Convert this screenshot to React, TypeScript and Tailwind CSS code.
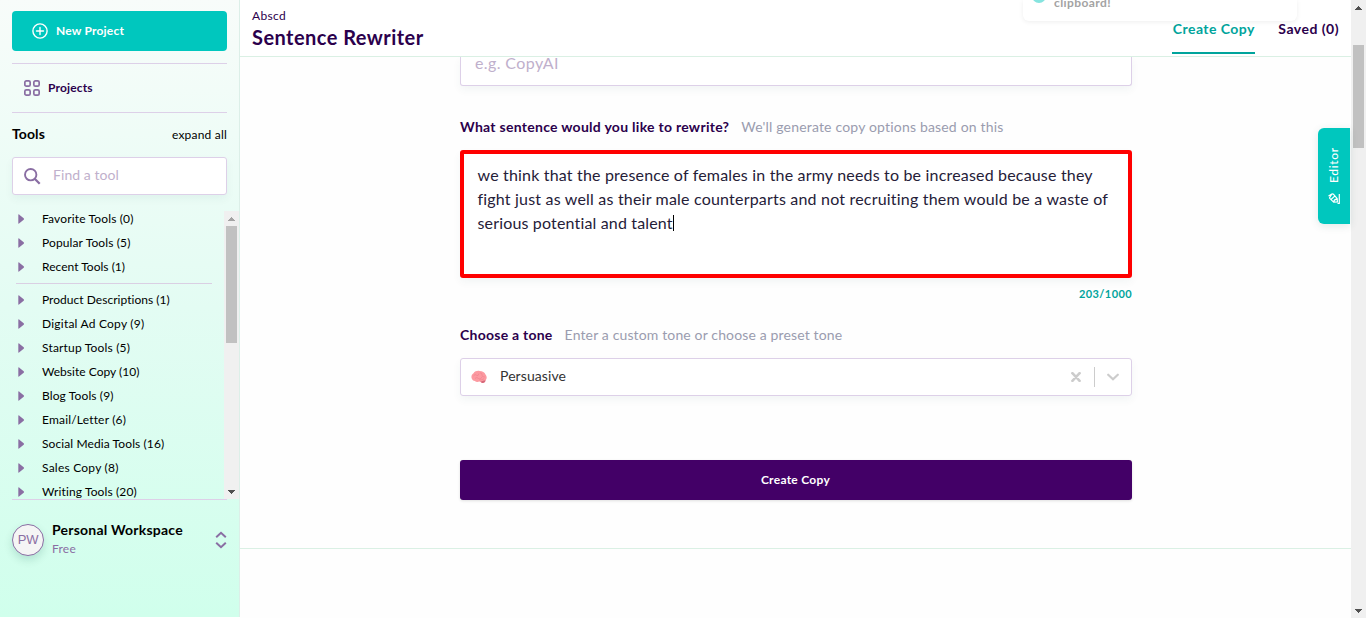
import React from "react";

const favourites = [
  { label: "Favorite Tools (0)", track: "tracking-[0.15px]" },
  { label: "Popular Tools (5)", track: "tracking-[0.12px]" },
  { label: "Recent Tools (1)", track: "tracking-[0.02px]" },
];

const categories = [
  { label: "Product Descriptions (1)", track: "tracking-[0.03px]" },
  { label: "Digital Ad Copy (9)", track: "tracking-[0.22px]" },
  { label: "Startup Tools (5)", track: "tracking-[0.18px]" },
  { label: "Website Copy (10)", track: "tracking-[0.02px]" },
  { label: "Blog Tools (9)", track: "tracking-[0.12px]" },
  { label: "Email/Letter (6)", track: "tracking-[0.18px]" },
  { label: "Social Media Tools (16)", track: "tracking-[0.1px]" },
  { label: "Sales Copy (8)", track: "tracking-[0.23px]" },
  { label: "Writing Tools (20)", track: "tracking-[0.12px]" },
];

function ToolRow({ label, track }: { label: string; track: string }) {
  return (
    <li className="flex h-6 items-center">
      <svg width="6" height="10" viewBox="0 0 6 10" className="mr-[18px] ml-[6px] shrink-0">
        <path d="M.3 .8Q.3 0 1 .5L5.700 4.300Q6.200 5 5.700 5.700L1 9.500Q.3 10 .3 9.200Z" fill="#8a6ea3" />
      </svg>
      <span className={`text-xs text-black ${track}`}>{label}</span>
    </li>
  );
}

function ScrollArrow({ down = false, color }: { down?: boolean; color: string }) {
  return (
    <svg width="15" height="15" viewBox="0 0 15 15" shapeRendering="crispEdges" className="shrink-0">
      <path d={down ? "M4 6h7L7.5 9.8Z" : "M4 9.500h7L7.500 5.500Z"} fill={color} />
    </svg>
  );
}

function Sidebar() {
  return (
    <aside className="flex h-[617px] w-60 shrink-0 flex-col border-r border-[#dcefe8] bg-linear-to-b from-[#f8fcfa] via-[#e3fcf3] to-[#d0ffec] pt-[11px] pl-3">
      <button className="flex h-10 w-[215px] shrink-0 items-center rounded bg-[#00c7be] pl-5 text-xs font-bold tracking-[0.2px] text-white">
        <svg width="16" height="16" viewBox="0 0 16 16" fill="none" stroke="currentColor" strokeWidth="1.400" className="mr-2">
          <circle cx="8" cy="8" r="7.100" />
          <path d="M8 4.500v7M4.500 8h7" strokeLinecap="round" />
        </svg>
        New Project
      </button>

      <div className="mt-3 flex h-[50px] w-[215px] shrink-0 items-center border-y border-[#ddd0e8] pl-3 text-xs font-bold tracking-[0.15px] text-[#2b004c]">
        <svg width="16" height="16" viewBox="0 0 16 16" fill="none" stroke="#8a6ea3" strokeWidth="1.700" className="mr-2">
          <rect x=".85" y=".85" width="5.300" height="5.300" rx="1.500" />
          <rect x="9.850" y=".85" width="5.300" height="5.300" rx="1.500" />
          <rect x=".85" y="9.850" width="5.300" height="5.300" rx="1.500" />
          <rect x="9.850" y="9.850" width="5.300" height="5.300" rx="1.500" />
        </svg>
        Projects
      </div>

      <div className="flex h-11 w-[215px] shrink-0 items-center justify-between">
        <span className="pb-[2px] text-sm font-bold tracking-[0.1px] text-black">Tools</span>
        <span className="text-xs tracking-[0.2px] text-black">expand all</span>
      </div>

      <div className="flex h-[38px] w-[215px] shrink-0 items-center rounded-[3px] border border-[#ddd0e8] bg-white pl-[11px] shadow-[0_4px_8px_rgba(0,80,70,0.05)]">
        <svg width="17" height="17" viewBox="0 0 17 17" fill="none" stroke="#8a6ea3" className="mr-3">
          <circle cx="6.700" cy="6.700" r="5.700" strokeWidth="1.900" />
          <path d="M10.700 10.700L15.700 15.700" strokeWidth="2.300" />
        </svg>
        <span className="pb-[2px] text-sm tracking-[0.07px] text-[#bfb0cc]">Find a tool</span>
      </div>

      <div className="mt-4 flex h-[288px] shrink-0 overflow-hidden">
        <div className="-mt-[4px] w-[212px] overflow-hidden">
          <ul>{favourites.map((t) => <ToolRow key={t.label} {...t} />)}</ul>
          <div className="my-[4px] ml-1 h-px w-[196px] bg-[#dacfe3]" />
          <ul>{categories.map((t) => <ToolRow key={t.label} {...t} />)}</ul>
        </div>
        <div className="flex w-[15px] flex-col items-center justify-between bg-[#f0f0f0]">
          <ScrollArrow color="#a3a3a3" />
          <div className="mb-auto h-[117px] w-[11px] bg-[#c1c1c1]" />
          <ScrollArrow down color="#505050" />
        </div>
      </div>

      <div className="flex h-20 w-[215px] shrink-0 items-center border-t border-[#ddd0e8]">
        <div className="flex size-8 items-center justify-center rounded-full border border-[#8a6ea3] bg-[#f5f5f5] font-['Liberation_Sans'] text-[13px] tracking-[-0.3px] text-[#8a6ea3] shadow-[0_4px_8px_rgba(0,80,70,0.16)]">
          PW
        </div>
        <div className="ml-2 flex flex-col">
          <span className="h-[19px] text-sm leading-[17px] font-bold tracking-[0.22px] text-black">Personal Workspace</span>
          <span className="text-xs leading-[18px] tracking-[0.23px] text-[#8a6ea3]">Free</span>
        </div>
        <svg width="12" height="18" viewBox="0 0 12 18" fill="none" stroke="#8a6ea3" strokeWidth="2" className="ml-auto">
          <path d="M1.200 6.200L6 1.800L10.800 6.200M1.200 11.800L6 16.200L10.800 11.800" />
        </svg>
      </div>
    </aside>
  );
}

function Header() {
  return (
    <header className="relative flex h-[57px] shrink-0 justify-between border-b border-[#daf0e4] bg-white pr-3 pl-3">
      <div className="flex flex-col text-[#2b004c]">
        <span className="mt-2 text-xs leading-4 tracking-[0.32px]">Abscd</span>
        <h1 className="text-xl leading-[26px] font-bold tracking-[0.45px]">Sentence Rewriter</h1>
      </div>
      <nav className="flex gap-[23px] text-sm font-bold">
        <span className="flex h-[54px] w-[83px] items-end justify-center border-b-2 border-[#00a49c] pb-[13px] tracking-[0.45px] text-[#00a49c]">Create Copy</span>
        <span className="flex h-[54px] items-end pb-[15px] tracking-[0.48px] text-[#2b004c]">Saved (0)</span>
      </nav>
      <div className="absolute top-0 left-[783px] flex h-[21px] w-[274px] rounded-b-md bg-white pl-[9px] shadow-[0_1px_5px_rgba(0,0,0,0.07)]">
        <svg width="14" height="3" viewBox="0 11 14 3">
          <circle cx="7" cy="7" r="7" fill="#86e4df" />
        </svg>
        <span className="-mt-[6px] ml-2 text-xs leading-[18px] font-bold tracking-[0.4px] text-[#a3a3a3]">clipboard!</span>
      </div>
    </header>
  );
}

function Brain() {
  return (
    <svg width="16" height="14" viewBox="0 0 16 14">
      <path d="M1 9C-.2 7 .6 4.300 2.500 3.200C3.800 1.300 6.500 .5 8.600 1C11.500 1 13.700 2.500 14.500 4.400C16.200 6.300 16 9 14.500 10.400C14.400 12.300 12.800 13.400 10.900 12.700C9.700 12.500 9.500 11.700 8.300 11.600C6.300 12.200 4.700 11.800 3.900 10.900C2.600 10.900 1.500 10.200 1 9Z" fill="#fc9aa1" />
      <path d="M9.500 11.800Q12 10.400 14.600 10.200Q14.200 13.600 10.700 12.700Z" fill="#d4687a" />
      <path d="M2.500 6Q4 3.500 5.500 5.200T8 3.500M4 8.500Q6 6.500 7.500 8.500T11 7M9 2.800Q11.500 3 11 5T13.800 7M8.500 10Q11 10.200 13 8.700" fill="none" stroke="#ee808c" strokeWidth=".6" />
    </svg>
  );
}

function Label({ children }: { children: React.ReactNode }) {
  return <div className="flex h-5 items-center gap-3 text-sm text-[#2b004c]">{children}</div>;
}

function Form() {
  return (
    <div className="flex h-[492px] shrink-0 flex-col border-b border-[#daf0e4] pl-[220px]">
      <div className="flex h-[29px] w-[672px] items-start rounded-b-[3px] border border-t-0 border-[#ddd0e8] bg-white pl-[14px] text-base leading-[11px] tracking-[0.39px] text-[#bfb0cc] shadow-[0_4px_8px_rgba(0,80,70,0.05)]">
        e.g. CopyAI
      </div>

      <div className="mt-[31px]">
        <Label>
          <span className="font-bold tracking-[0.28px]">What sentence would you like to rewrite?</span>
          <span className="tracking-[0.18px] text-[#9a9caf]">We'll generate copy options based on this</span>
        </Label>
      </div>
      <div className="mt-[13px] h-32 w-[672px] rounded-[3px] border-4 border-[#ff0000] bg-white pt-[9px] pl-[13.500px] text-base leading-6 whitespace-nowrap text-[#252038] shadow-[0_4px_8px_rgba(0,80,70,0.05)]">
        <div className="tracking-[0.18px]">we think that the presence of females in the army needs to be increased because they</div>
        <div className="tracking-[0.195px]">fight just as well as their male counterparts and not recruiting them would be a waste of</div>
        <div className="flex items-center">
          <span className="tracking-[0.16px]">serious potential and talent</span>
          <span className="h-4 w-px bg-black" />
        </div>
      </div>
      <div className="mt-2 w-[672px] text-right text-[11px] leading-4 font-bold tracking-[0.4px] text-[#00a49c]">203/1000</div>

      <div className="mt-[23px]">
        <Label>
          <span className="font-bold tracking-[0.25px]">Choose a tone</span>
          <span className="tracking-[0.14px] text-[#9a9caf]">Enter a custom tone or choose a preset tone</span>
        </Label>
      </div>
      <div className="mt-[13px] flex h-[38px] w-[672px] items-center rounded-[3px] border border-[#ddd0e8] bg-white pr-3 pl-[10px] shadow-[0_4px_8px_rgba(0,80,70,0.05)]">
        <Brain />
        <span className="ml-[13px] pb-[2px] text-sm tracking-[0.09px] text-[#333]">Persuasive</span>
        <svg width="10" height="10" viewBox="0 0 10 10" stroke="#cccccc" strokeWidth="2.600" strokeLinecap="round" className="ml-auto">
          <path d="M1.400 1.200L8.600 8.800M8.600 1.200L1.400 8.800" />
        </svg>
        <div className="mr-3 ml-[13px] h-5 w-px bg-[#cccccc]" />
        <svg width="12" height="8" viewBox="0 0 12 8" fill="none" stroke="#cccccc" strokeWidth="2.200" strokeLinecap="round">
          <path d="M1.200 1.700L6 6.200L10.800 1.700" />
        </svg>
      </div>

      <button className="mt-16 h-10 w-[672px] rounded-[3px] bg-[#430067] pr-px text-xs font-bold tracking-[0.28px] text-white shadow-[0_1px_3px_rgba(0,0,0,0.12)]">Create Copy</button>
    </div>
  );
}

export default function App() {
  return (
    <div className="relative flex h-[618px] w-[1366px] overflow-hidden bg-white font-['Lato',sans-serif]">
      <Sidebar />
      <main className="flex flex-1 flex-col bg-[#fefefe]">
        <Header />
        <Form />
      </main>
      <div className="flex w-[15px] shrink-0 flex-col items-center bg-[#f0f0f0]">
        <ScrollArrow color="#505050" />
        <div className="mt-[30px] h-[103px] w-[11px] bg-[#c1c1c1]" />
        <div className="mt-auto flex">
          <ScrollArrow down color="#505050" />
        </div>
      </div>
      <button className="absolute top-32 left-[1318px] flex h-24 w-8 flex-col items-center rounded-l-md bg-[#00c7be] text-white shadow-[0_2px_8px_rgba(0,80,70,0.12)]">
        <span className="mt-[19px] h-[37px] rotate-180 text-xs leading-4 font-medium tracking-[0.65px] [writing-mode:vertical-rl]">Editor</span>
        <svg width="12" height="11" viewBox="0 0 12 11" fill="none" stroke="currentColor" strokeWidth="1.200" className="mt-[9px]" strokeLinejoin="round">
          <path d="M.5 3L3.800 1.100Q5 .7 5.800 1.600L9.200 5.600L9.400 9L5.600 9.200L1.800 5.400Q1.300 4.600 2 3.800L3.800 1.100M3 6.500L7 2.900M5.600 9.200Q5.800 6.500 9.200 5.900M11.300 1v9.400H9.500" />
        </svg>
      </button>
    </div>
  );
}
